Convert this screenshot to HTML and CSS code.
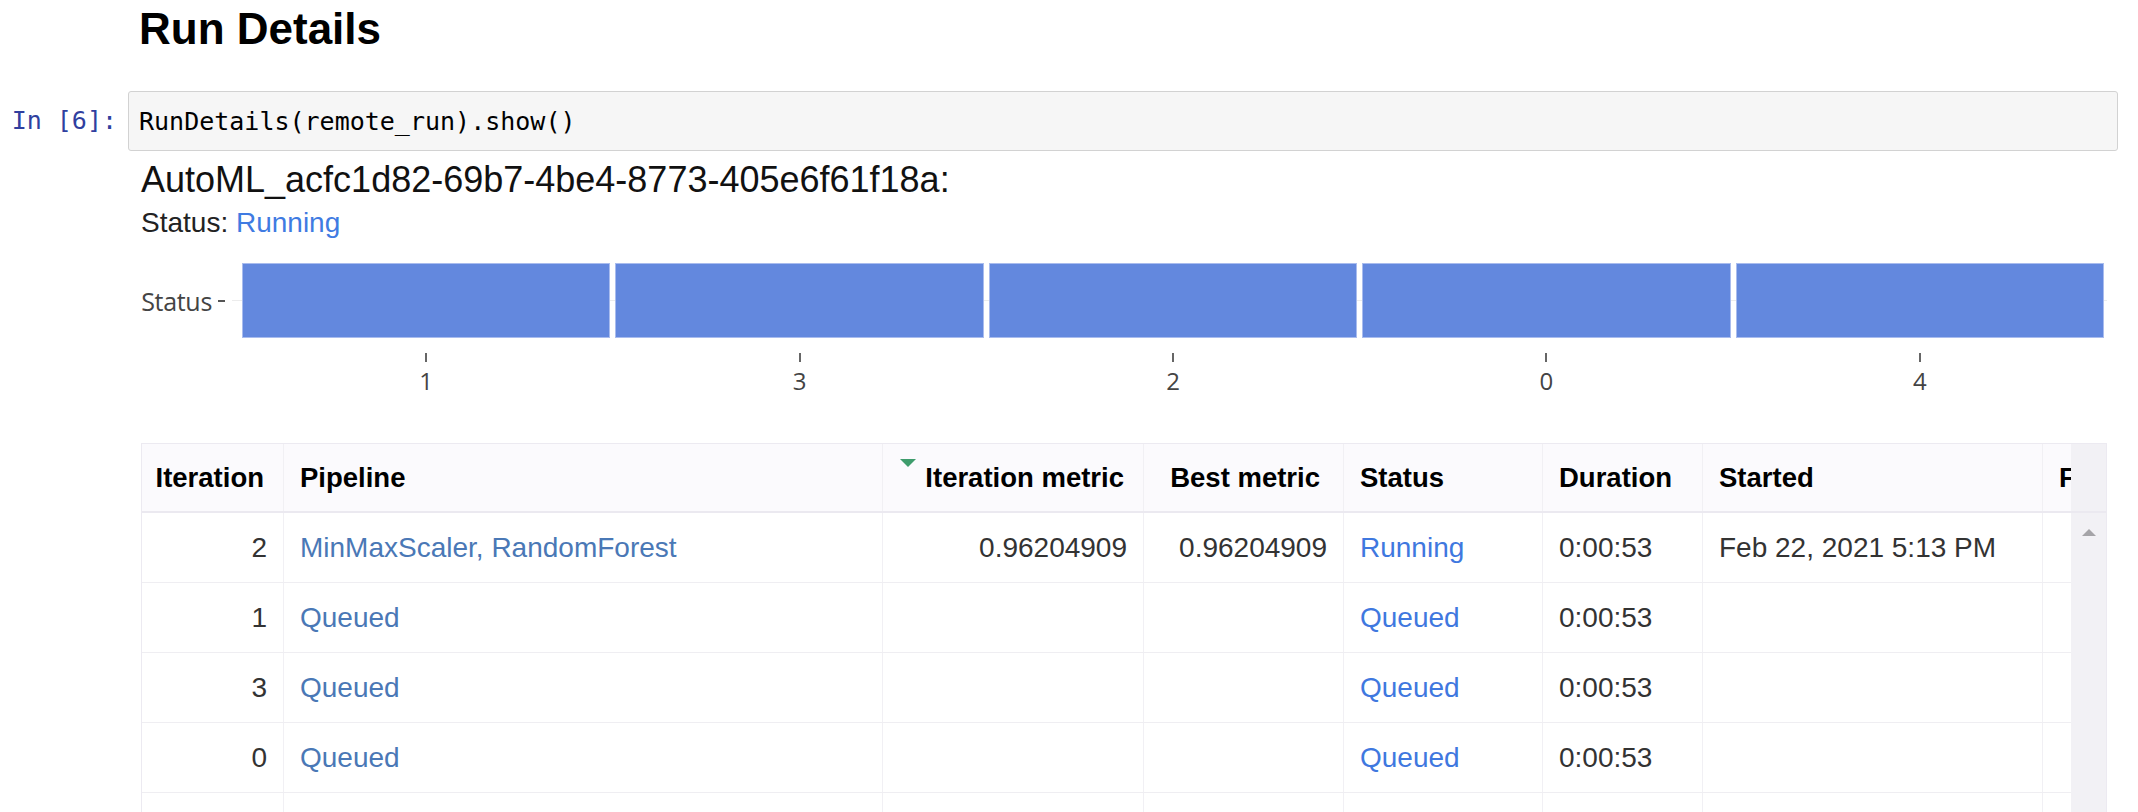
FILE: index.html
```html
<!DOCTYPE html>
<html>
<head>
<meta charset="utf-8">
<title>Run Details</title>
<link rel="stylesheet" href="styles.css">
</head>
<body>
<div class="page">
  <h2 class="title">Run Details</h2>

  <div class="cell">
    <div class="prompt">In [6]:</div>
    <div class="input"><code class="code">RunDetails(remote_run).show()</code></div>
  </div>

  <div class="output">
    <div class="run-name">AutoML_acfc1d82-69b7-4be4-8773-405e6f61f18a:</div>
    <div class="run-status">Status: <span class="running">Running</span></div>

    <div class="chart">
      <div class="chart-row">
        <div class="y-label">Status<span class="y-tick"></span></div>
        <div class="bars">
          <div class="gridline"></div>
          <div class="bar"></div>
          <div class="bar"></div>
          <div class="bar"></div>
          <div class="bar"></div>
          <div class="bar"></div>
        </div>
      </div>
      <div class="x-axis">
        <div class="x-tick"><span class="tick-mark"></span><span class="tick-label">1</span></div>
        <div class="x-tick"><span class="tick-mark"></span><span class="tick-label">3</span></div>
        <div class="x-tick"><span class="tick-mark"></span><span class="tick-label">2</span></div>
        <div class="x-tick"><span class="tick-mark"></span><span class="tick-label">0</span></div>
        <div class="x-tick"><span class="tick-mark"></span><span class="tick-label">4</span></div>
      </div>
    </div>

    <div class="grid">
      <div class="grid-body">
        <div class="row head">
          <div class="c num">Iteration</div>
          <div class="c">Pipeline</div>
          <div class="c num sorted"><span class="sort-arrow"></span>Iteration metric</div>
          <div class="c num best">Best metric</div>
          <div class="c">Status</div>
          <div class="c">Duration</div>
          <div class="c">Started</div>
          <div class="c">Finished</div>
        </div>
        <div class="row">
          <div class="c num">2</div>
          <div class="c link">MinMaxScaler, RandomForest</div>
          <div class="c num">0.96204909</div>
          <div class="c num">0.96204909</div>
          <div class="c status">Running</div>
          <div class="c">0:00:53</div>
          <div class="c">Feb 22, 2021 5:13 PM</div>
          <div class="c"></div>
        </div>
        <div class="row">
          <div class="c num">1</div>
          <div class="c link">Queued</div>
          <div class="c num"></div>
          <div class="c num"></div>
          <div class="c status">Queued</div>
          <div class="c">0:00:53</div>
          <div class="c"></div>
          <div class="c"></div>
        </div>
        <div class="row">
          <div class="c num">3</div>
          <div class="c link">Queued</div>
          <div class="c num"></div>
          <div class="c num"></div>
          <div class="c status">Queued</div>
          <div class="c">0:00:53</div>
          <div class="c"></div>
          <div class="c"></div>
        </div>
        <div class="row">
          <div class="c num">0</div>
          <div class="c link">Queued</div>
          <div class="c num"></div>
          <div class="c num"></div>
          <div class="c status">Queued</div>
          <div class="c">0:00:53</div>
          <div class="c"></div>
          <div class="c"></div>
        </div>
        <div class="row">
          <div class="c num"></div>
          <div class="c"></div>
          <div class="c num"></div>
          <div class="c num"></div>
          <div class="c"></div>
          <div class="c"></div>
          <div class="c"></div>
          <div class="c"></div>
        </div>
      </div>
      <div class="scrollbar">
        <div class="scroll-head"></div>
        <div class="scroll-track"><span class="scroll-up"></span></div>
      </div>
    </div>
  </div>
</div>
</body>
</html>
```

FILE: styles.css
```css
html, body {
  margin: 0;
  padding: 0;
  background: #ffffff;
  height: 812px;
  overflow: hidden;
}

body {
  font-family: "Liberation Sans", Arial, sans-serif;
  color: #000;
}

.page {
  width: 2138px;
}

.title {
  margin: 3px 0 0 0;
  padding-left: 139px;
  font-size: 44px;
  line-height: 52px;
  font-weight: bold;
  color: #000;
}

.cell {
  display: flex;
  margin-top: 36px;
  margin-right: 20px;
}

.prompt {
  width: 128px;
  box-sizing: border-box;
  padding-right: 11px;
  text-align: right;
  font-family: "DejaVu Sans Mono", "Liberation Mono", monospace;
  font-size: 25px;
  line-height: 60px;
  color: #303f9f;
}

.input {
  flex: 1;
  height: 60px;
  box-sizing: border-box;
  border: 1px solid #d2d2d2;
  border-radius: 3px;
  background: #f6f6f6;
  display: flex;
  align-items: center;
  padding-left: 10px;
}

.code {
  font-family: "DejaVu Sans Mono", "Liberation Mono", monospace;
  font-size: 25px;
  color: #000;
}

.output {
  padding-left: 141px;
}

.run-name {
  margin-top: 9px;
  font-size: 36px;
  line-height: 40px;
  color: #111;
}

.run-status {
  margin-top: 7px;
  font-size: 28px;
  line-height: 32px;
  color: #222;
}

.running {
  color: #3f7be2;
}

.chart {
  padding-top: 24px;
  margin-right: 34px;
}

.chart-row {
  display: flex;
  align-items: center;
}

.y-label {
  width: 101px;
  margin-left: -3px;
  display: flex;
  align-items: center;
  justify-content: flex-end;
  font-family: "Open Sans", sans-serif;
  font-size: 25px;
  letter-spacing: -0.3px;
  color: #444;
  box-sizing: border-box;
  padding-right: 14px;
}

.y-tick {
  display: inline-block;
  width: 7px;
  height: 2px;
  background: #555;
  margin-left: 6px;
}

.bars {
  flex: 1;
  display: flex;
  gap: 5px;
  height: 75px;
  position: relative;
  margin-left: 3px;
}

.gridline {
  position: absolute;
  left: -10px;
  right: -3px;
  top: 37px;
  height: 1px;
  background: #ececec;
}

.bar {
  flex: 1;
  position: relative;
  background: #6388de;
  border: 1px solid #a9bcee;
  box-sizing: border-box;
}

.x-axis {
  display: flex;
  gap: 5px;
  margin-left: 101px;
}

.x-tick {
  flex: 1;
  display: flex;
  flex-direction: column;
  align-items: center;
}

.tick-mark {
  display: block;
  width: 2px;
  height: 9px;
  margin-top: 15px;
  background: #666;
}

.tick-label {
  display: block;
  margin-top: 7px;
  font-family: "Open Sans", sans-serif;
  font-size: 24px;
  line-height: 24px;
  color: #444;
}

.grid {
  margin-top: 50px;
  margin-right: 31px;
  display: flex;
  border-top: 1px solid #eceaf1;
  border-left: 1px solid #eceaf1;
  border-right: 1px solid #eceaf1;
}

.grid-body {
  flex: 1;
  overflow: hidden;
}

.row {
  display: grid;
  grid-template-columns: 142px 599px 261px 200px 199px 160px 340px 200px;
  height: 70px;
  border-bottom: 1px solid #efeef2;
  box-sizing: border-box;
  font-size: 28px;
  color: #333;
}

.row.head {
  height: 69px;
  border-bottom: 2px solid #ebe9f0;
  background: #fbfafd;
  font-size: 27.5px;
  font-weight: bold;
  color: #000;
}

.c {
  display: flex;
  align-items: center;
  box-sizing: border-box;
  padding: 0 16px;
  border-right: 1px solid #f1f0f4;
  white-space: nowrap;
  overflow: hidden;
}

.c.num {
  justify-content: flex-end;
  padding-right: 16px;
}

.row.head .c.num {
  padding-right: 19px;
}

.row.head .c.best {
  padding-right: 23px;
}

.c.sorted {
  position: relative;
}

.sort-arrow {
  position: absolute;
  left: 17px;
  top: 15px;
  width: 0;
  height: 0;
  border-left: 8px solid transparent;
  border-right: 8px solid transparent;
  border-top: 8px solid #3e9c6c;
}

.link {
  color: #4a78b6;
}

.status {
  color: #3f78df;
}

.scrollbar {
  width: 35px;
  background: #f2f1f5;
  display: flex;
  flex-direction: column;
}

.scroll-head {
  height: 69px;
  box-sizing: border-box;
  border-bottom: 2px solid #ebe9f0;
}

.scroll-track {
  flex: 1;
  display: flex;
  justify-content: center;
}

.scroll-up {
  display: block;
  margin-top: 16px;
  width: 0;
  height: 0;
  border-left: 7px solid transparent;
  border-right: 7px solid transparent;
  border-bottom: 7px solid #a5a4a8;
}
```
